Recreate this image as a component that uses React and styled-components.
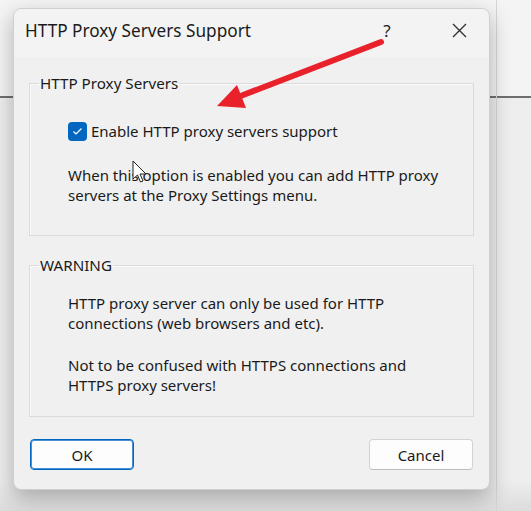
import React from 'react';
import styled, { createGlobalStyle } from 'styled-components';

const GlobalStyle = createGlobalStyle`
  html, body {
    margin: 0;
    padding: 0;
    background: #ececec;
  }
  body {
    font-family: "Noto Sans", "Open Sans", sans-serif;
    color: #1a1a1a;
  }
`;

// the window behind the dialog
const Page = styled.div`
  position: relative;
  width: 531px;
  height: 511px;
  overflow: hidden;
  padding: 8px 0 0 13px;
  box-sizing: border-box;
  background:
    linear-gradient(to right, transparent 496px, #d6d6d6 496px 497px, transparent 497px),
    linear-gradient(to bottom, #f4f4f4 0 96px, #6f6f6f 96px 98px, #eeeeee 98px 480px, #dcdcdc 511px);
`;

const Dialog = styled.div`
  width: 477px;
  height: 482px;
  box-sizing: border-box;
  background: #f0f0f0;
  border: 1px solid #cfcfcf;
  border-radius: 8px;
  box-shadow: 0 8px 22px rgba(0, 0, 0, 0.28);
  display: flex;
  flex-direction: column;
`;

const TitleBar = styled.div`
  height: 48px;
  display: flex;
  align-items: center;
  padding: 0 7px 6px 11px;
  box-sizing: border-box;
  background: #f3f3f3;
  border-radius: 8px 8px 0 0;
`;

const Title = styled.div`
  flex: 1;
  font-size: 17.2px;
  color: #1b1b1b;
`;

const TitleButton = styled.div`
  width: ${p => p.$w}px;
  margin-right: ${p => p.$mr || 0}px;
  display: flex;
  justify-content: center;
  align-items: center;
  font-size: 17px;
  color: #222;
`;

const Body = styled.div`
  flex: 1;
  display: flex;
  flex-direction: column;
  padding: 16px 15px 0 15px;
  gap: 19px;
`;

const Group = styled.fieldset`
  margin: 0;
  height: ${p => p.$h}px;
  box-sizing: border-box;
  border: 1px solid #dadada;
  box-shadow: inset 1px 1px 0 #fafafa;
  padding: 0 10px 0 38px;
  display: flex;
  flex-direction: column;
`;

const Legend = styled.legend`
  margin-left: -29px;
  padding: 0 1px;
  font-size: 15.2px;
  color: #1a1a1a;
`;

const CheckRow = styled.label`
  display: flex;
  align-items: center;
  gap: 4px;
  margin-top: 28px;
  font-size: 15px;
`;

const Box = styled.span`
  width: 19px;
  height: 19px;
  border-radius: 4px;
  background: #0067c0;
  display: flex;
  align-items: center;
  justify-content: center;
`;

const Text = styled.p`
  margin: ${p => p.$mt}px 0 0 0;
  font-size: 15px;
  line-height: 20px;
  color: #1a1a1a;
`;

const Footer = styled.div`
  display: flex;
  justify-content: space-between;
  padding: 19px 16px 0 16px;
`;

const Button = styled.button`
  width: 104px;
  height: 31px;
  box-sizing: border-box;
  background: #fdfdfd;
  border: 1px solid ${p => (p.$primary ? '#0067c0' : '#d3d3d3')};
  border-bottom-color: ${p => (p.$primary ? '#0067c0' : '#bdbdbd')};
  box-shadow: ${p => (p.$primary ? 'inset 0 0 0 1px #4a90d6' : 'none')};
  border-radius: 4px;
  font-family: inherit;
  font-size: 15px;
  color: #1a1a1a;
  padding: 0;
`;

const Overlay = styled.svg`
  position: absolute;
  left: 0;
  top: 0;
  pointer-events: none;
`;

export default function App() {
  return (
    <>
      <GlobalStyle />
      <Page>
        <Dialog>
          <TitleBar>
            <Title>HTTP Proxy Servers Support</Title>
            <TitleButton $w={30} $mr={34}>?</TitleButton>
            <TitleButton $w={46}>
              <svg width="15" height="15" viewBox="0 0 15 15">
                <path d="M1 1 L14 14 M14 1 L1 14" stroke="#333" strokeWidth="1.4" />
              </svg>
            </TitleButton>
          </TitleBar>
          <Body>
            <Group $h={163}>
              <Legend>HTTP Proxy Servers</Legend>
              <CheckRow>
                <Box>
                  <svg width="11" height="9" viewBox="0 0 11 9">
                    <path d="M1.5 4.5 L4 7 L9.5 1.5" stroke="#fff" strokeWidth="1.2" fill="none" />
                  </svg>
                </Box>
                Enable HTTP proxy servers support
              </CheckRow>
              <Text $mt={24}>
                When this option is enabled you can add HTTP proxy servers at the Proxy Settings menu.
              </Text>
            </Group>
            <Group $h={162}>
              <Legend>WARNING</Legend>
              <Text $mt={18}>
                HTTP proxy server can only be used for HTTP<br />connections (web browsers and etc).
              </Text>
              <Text $mt={22}>
                Not to be confused with HTTPS connections and<br />HTTPS proxy servers!
              </Text>
            </Group>
          </Body>
          <Footer>
            <Button $primary>OK</Button>
            <Button>Cancel</Button>
          </Footer>
          <div style={{ height: 19 }} />
        </Dialog>
        <Overlay width="531" height="511">
          <line x1="381" y1="42" x2="238" y2="97" stroke="#e8212b" strokeWidth="6" strokeLinecap="round" />
          <polygon points="217,106 237,85 246,108" fill="#e8212b" />
          <path
            d="M133 161 L133 179 L137.5 175 L140.5 182 L143 181 L140 174 L146 174 Z"
            fill="#fff"
            stroke="#222"
            strokeWidth="1"
            strokeLinejoin="round"
          />
        </Overlay>
      </Page>
    </>
  );
}
